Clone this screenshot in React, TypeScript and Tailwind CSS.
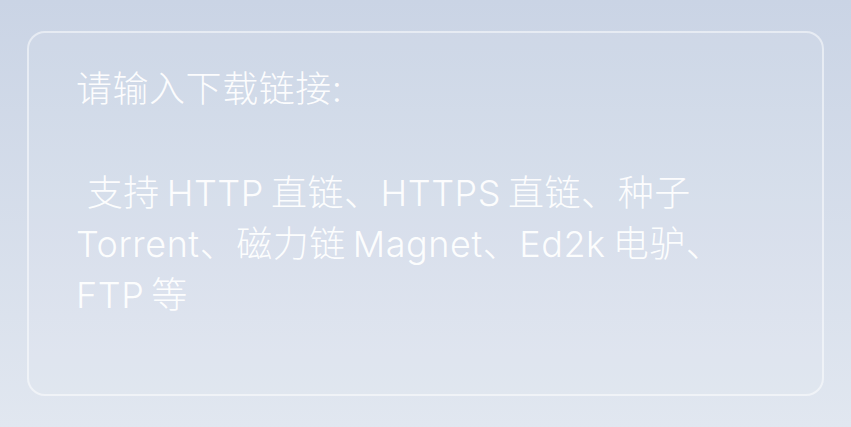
const LINES = [
  '请输入下载链接:',
  '',
  ' 支持HTTP直链、HTTPS直链、种子',
  'Torrent、磁力链Magnet、Ed2k电驴、',
  'FTP等',
];

const isHan = (c: string) => /[\u4e00-\u9fff]/.test(c);
const isLatin = (c: string) => /[A-Za-z0-9]/.test(c);

// mimic the auto spacing between Han and Latin runs
function spaced(line: string) {
  const out: { text: string; gap: boolean }[] = [];
  let cur = '';
  for (let i = 0; i < line.length; i++) {
    const prev = line[i - 1];
    const c = line[i];
    if (prev && ((isHan(prev) && isLatin(c)) || (isLatin(prev) && isHan(c)))) {
      out.push({ text: cur, gap: false });
      cur = '';
      out.push({ text: '', gap: true });
    }
    cur += c;
  }
  out.push({ text: cur, gap: false });
  return out;
}

export default function App() {
  return (
    <div className="w-[851px] h-[427px] bg-gradient-to-b from-[#cad4e5] to-[#e1e7f0] px-[27px] pt-[31px] pb-[31px]">
      <div
        className="h-[365px] rounded-[18px] border-2 border-white/50 bg-white/[0.06] px-[47px] pt-[31px]"
        style={{ fontFamily: 'Inter, "Noto Sans CJK SC", sans-serif' }}
      >
        {LINES.map((l, i) => (
          <div
            key={i}
            className={`h-[51px] text-[36px] leading-[51px] tracking-[0.015em] text-white/95 font-light whitespace-pre ${i === 0 ? 'mb-[2px]' : ''}`}
          >
            {spaced(l).map((s, j) =>
              s.gap ? <span key={j} className="inline-block w-[7px]" /> : <span key={j}>{s.text}</span>
            )}
          </div>
        ))}
      </div>
    </div>
  );
}
